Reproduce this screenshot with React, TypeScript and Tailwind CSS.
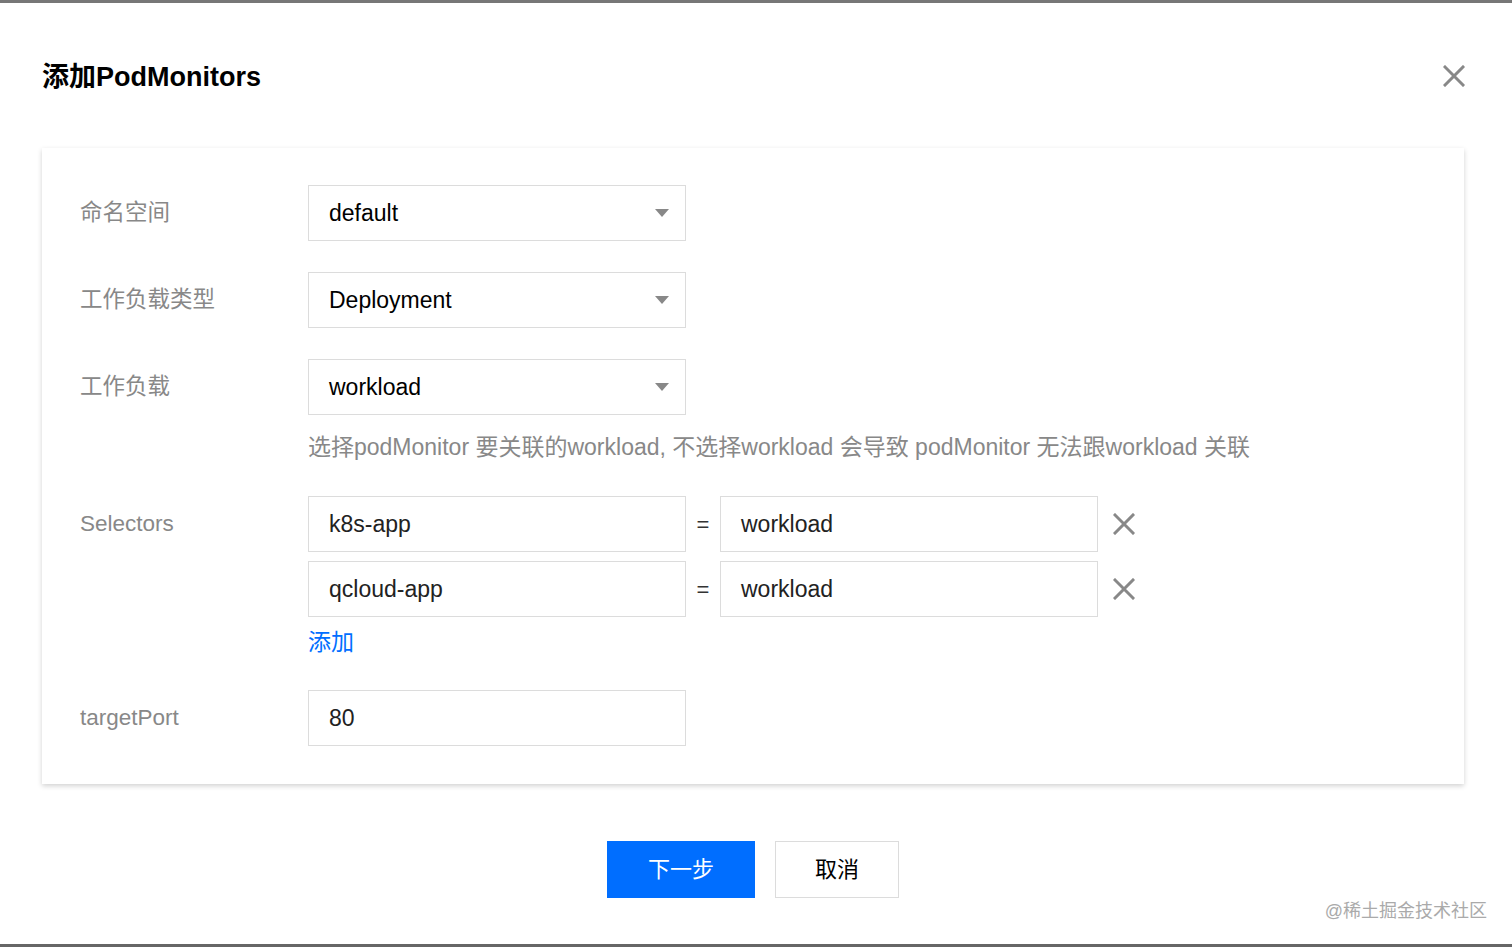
import React from "react";

const font = { fontFamily: '"Liberation Sans", "Noto Sans CJK SC", Arial, sans-serif' };

function Caret() {
  return (
    <svg width="14" height="8" viewBox="0 0 14 8" className="shrink-0">
      <path d="M0 0 L14 0 L7 8 Z" fill="#888" />
    </svg>
  );
}

function Cross({ size = 22, stroke = 3 }: { size?: number; stroke?: number }) {
  return (
    <svg width={size} height={size} viewBox="0 0 22 22" className="shrink-0">
      <path d="M2 2 L20 20 M20 2 L2 20" stroke="#888" strokeWidth={stroke} strokeLinecap="square" fill="none" />
    </svg>
  );
}

function Select({ value }: { value: string }) {
  return (
    <div className="flex h-[56px] w-[378px] items-center justify-between border border-[#dcdcdc] bg-white pl-[20px] pr-[16px] text-[23px] text-black">
      <span>{value}</span>
      <Caret />
    </div>
  );
}

function Input({ value, w = "w-[378px]" }: { value: string; w?: string }) {
  return (
    <div className={`flex h-[56px] items-center border border-[#dcdcdc] bg-white pl-[20px] text-[23px] text-[#222] ${w}`}>
      {value}
    </div>
  );
}

function Row({ label, children }: { label: string; children: React.ReactNode }) {
  return (
    <div className="flex items-start">
      <div className="flex h-[56px] w-[228px] shrink-0 items-center text-[22.5px] text-[#888]">{label}</div>
      <div className="flex flex-col">{children}</div>
    </div>
  );
}

function SelectorRow({ k, v }: { k: string; v: string }) {
  return (
    <div className="flex items-center">
      <Input value={k} />
      <div className="flex w-[34px] justify-center text-[22px] text-[#333]">=</div>
      <Input value={v} w="w-[378px]" />
      <div className="ml-[15px] flex items-center">
        <Cross />
      </div>
    </div>
  );
}

export default function App() {
  return (
    <div className="relative flex h-[947px] w-full flex-col bg-white" style={font}>
      <div className="h-[3px] w-full bg-[#777]" />
      <div className="flex flex-1 flex-col px-[42px] pr-[48px]">
        <div className="flex items-center justify-between pt-[56px]">
          <h1 className="text-[27px] font-bold leading-[36px] text-black">添加PodMonitors</h1>
          <div className="mr-[-1px] mt-[-2px]">
            <Cross size={22} stroke={3} />
          </div>
        </div>
        <div className="mt-[53px] flex flex-col bg-white pb-[38px] pl-[38px] pt-[37px] shadow-[0_2px_5px_rgba(0,0,0,0.18)]">
          <div className="flex flex-col gap-[31px]">
            <Row label="命名空间">
              <Select value="default" />
            </Row>
            <Row label="工作负载类型">
              <Select value="Deployment" />
            </Row>
            <Row label="工作负载">
              <Select value="workload" />
              <div className="mt-[17px] text-[23px] leading-[30px] text-[#888]">
                选择podMonitor 要关联的workload, 不选择workload 会导致 podMonitor 无法跟workload 关联
              </div>
            </Row>
          </div>
          <div className="mt-[34px]">
            <Row label="Selectors">
              <div className="flex flex-col gap-[9px]">
                <SelectorRow k="k8s-app" v="workload" />
                <SelectorRow k="qcloud-app" v="workload" />
              </div>
              <div className="mt-[10px] text-[23px] leading-[30px] text-[#006eff]">添加</div>
            </Row>
          </div>
          <div className="mt-[33px]">
            <Row label="targetPort">
              <Input value="80" />
            </Row>
          </div>
        </div>
        <div className="mt-[57px] flex justify-center gap-[20px]">
          <div className="flex h-[57px] w-[148px] items-center justify-center bg-[#006eff] text-[22px] text-white">下一步</div>
          <div className="flex h-[57px] w-[124px] items-center justify-center border border-[#dcdcdc] bg-white text-[22px] text-black">取消</div>
        </div>
      </div>
      <div className="absolute bottom-[22px] right-[25px] text-[18px] text-[#aaa]">@稀土掘金技术社区</div>
      <div className="h-[3px] w-full bg-[#666]" />
    </div>
  );
}
